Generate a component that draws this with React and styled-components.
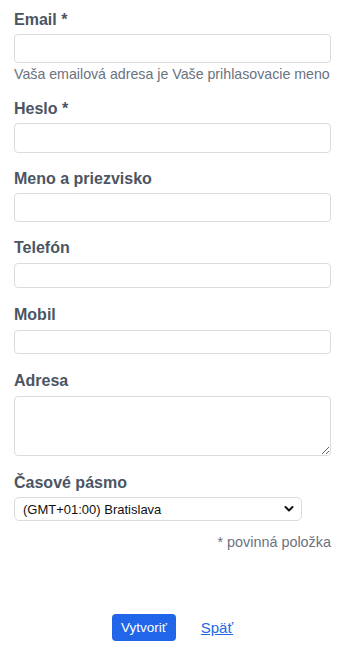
import React from 'react';
import styled, { createGlobalStyle } from 'styled-components';

const GlobalStyle = createGlobalStyle`
  html, body {
    margin: 0;
    padding: 0;
    background: #ffffff;
  }
  body {
    font-family: "Liberation Sans", Arial, sans-serif;
    color: #1f2937;
  }
  * {
    box-sizing: border-box;
  }
`;

const Form = styled.form`
  width: 358px;
  padding: 8px 27px 0 14px;
`;

const Group = styled.div`
  display: flex;
  flex-direction: column;
  margin-bottom: 14px;
`;

const Label = styled.label`
  font-size: 16px;
  line-height: 24px;
  font-weight: 700;
  color: #4b5563;
  margin-bottom: 2px;
`;

const Input = styled.input`
  width: 317px;
  height: ${p => p.$h || 29}px;
  margin: ${p => p.$m || 0}px 0;
  border: 1px solid #dadcdf;
  border-radius: 4px;
  padding: 0 8px;
  font-family: inherit;
  font-size: 14px;
  background: #fff;
  outline: none;
`;

const TextArea = styled.textarea`
  width: 317px;
  height: 60px;
  margin: 1px 0;
  border: 1px solid #dadcdf;
  border-radius: 4px;
  padding: 6px 8px;
  font-family: inherit;
  font-size: 14px;
  outline: none;
  display: block;
`;

const Help = styled.div`
  margin-top: 2px;
  font-size: 14.2px;
  line-height: 18px;
  color: #6b7280;
  white-space: nowrap;
`;

const SelectWrap = styled.div`
  position: relative;
  width: 288px;
`;

const Select = styled.select`
  width: 288px;
  height: 24px;
  appearance: none;
  -webkit-appearance: none;
  border: 1px solid #dadcdf;
  border-radius: 5px;
  padding: 0 24px 0 8px;
  font-family: "Liberation Sans", Arial, sans-serif;
  font-size: 13px;
  color: #111;
  background: #fff;
  outline: none;
`;

const Chevron = styled.svg`
  position: absolute;
  right: 8px;
  top: 8px;
  pointer-events: none;
`;

const Required = styled.div`
  text-align: right;
  font-size: 14.4px;
  line-height: 18px;
  color: #6b7280;
  margin-top: -2px;
`;

const Actions = styled.div`
  display: flex;
  justify-content: center;
  align-items: center;
  gap: 25px;
  margin-top: 63px;
`;

const Button = styled.button`
  height: 27px;
  padding: 0 9px;
  border: none;
  border-radius: 4px;
  background: #2166e8;
  color: #fff;
  font-family: "Liberation Sans", Arial, sans-serif;
  font-size: 13.5px;
  cursor: pointer;
`;

const Back = styled.a`
  color: #2166e8;
  font-size: 15px;
  text-decoration: underline;
  cursor: pointer;
`;

function Field({ label, children }) {
  return (
    <Group>
      <Label>{label}</Label>
      {children}
    </Group>
  );
}

export default function App() {
  return (
    <>
      <GlobalStyle />
      <Form onSubmit={e => e.preventDefault()}>
        <Field label="Email *">
          <Input type="email" $h={29} />
          <Help>Vaša emailová adresa je Vaše prihlasovacie meno</Help>
        </Field>
        <Field label="Heslo *">
          <Input type="password" $h={30} />
        </Field>
        <Field label="Meno a priezvisko">
          <Input type="text" $h={29} />
        </Field>
        <Field label="Telefón">
          <Input type="text" $h={25} $m={1} />
        </Field>
        <Field label="Mobil">
          <Input type="text" $h={24} $m={1} />
        </Field>
        <Field label="Adresa">
          <TextArea />
        </Field>
        <Field label="Časové pásmo">
          <SelectWrap>
            <Select defaultValue="bratislava">
              <option value="bratislava">(GMT+01:00) Bratislava</option>
            </Select>
            <Chevron width="10" height="8" viewBox="0 0 10 8">
              <path d="M1.5 2 L5 5.5 L8.5 2" fill="none" stroke="#111" strokeWidth="2" strokeLinecap="round" strokeLinejoin="round" />
            </Chevron>
          </SelectWrap>
        </Field>
        <Required>* povinná položka</Required>
        <Actions>
          <Button type="submit">Vytvoriť</Button>
          <Back>Späť</Back>
        </Actions>
      </Form>
    </>
  );
}
